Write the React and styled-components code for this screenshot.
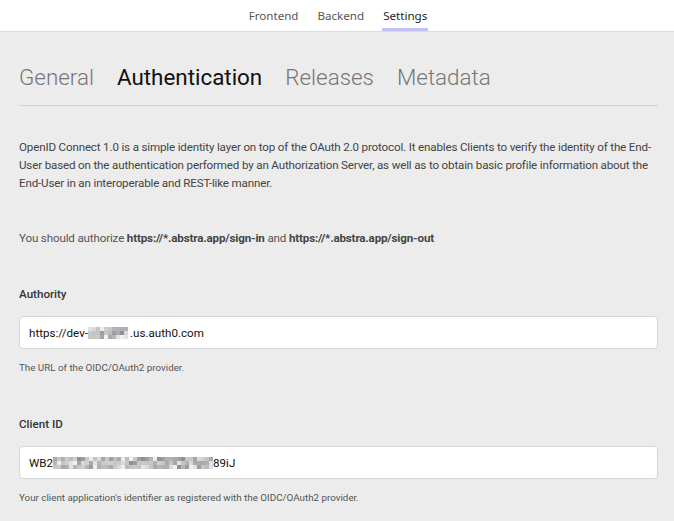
import React from "react";
import styled, { createGlobalStyle } from "styled-components";

const GlobalStyle = createGlobalStyle`
  html, body {
    margin: 0;
    padding: 0;
    background: #ececec;
  }
  body {
    font-family: Roboto, "Liberation Sans", sans-serif;
  }
`;

const topTabs = ["Frontend", "Backend", "Settings"];
const settingsTabs = ["General", "Authentication", "Releases", "Metadata"];

// pixelated (blurred) chunks of the secrets
const shades = [
  "#c9c9c9", "#b8b8bd", "#e2e2e2", "#a9a9ae", "#cfcfd3", "#bcbcbc", "#9d9da3",
  "#ececec", "#b0b0b5", "#c4c4c8", "#a4a4aa", "#dadada", "#b5b5b8", "#c8c8c0",
  "#f0f0f0", "#8f8f95",
];

const pick = (i, seed) => {
  const h = Math.sin(i * 12.9898 + seed * 78.233) * 43758.5453;
  return shades[Math.floor((h - Math.floor(h)) * shades.length)];
};

function Mosaic({ width, seed }) {
  const cols = Math.round(width / 4);
  return (
    <MosaicBox style={{ width }}>
      {Array.from({ length: cols * 3 }).map((_, i) => (
        <MosaicCell key={i} $c={pick(i, seed)} />
      ))}
    </MosaicBox>
  );
}

export default function App() {
  return (
    <Page>
      <GlobalStyle />
      <Header>
        {topTabs.map(t => (
          <TopTab key={t} $active={t === "Settings"}>{t}</TopTab>
        ))}
      </Header>
      <Content>
        <Tabs>
          {settingsTabs.map(t => (
            <Tab key={t} $active={t === "Authentication"}>{t}</Tab>
          ))}
        </Tabs>
        <Intro>
          OpenID Connect 1.0 is a simple identity layer on top of the OAuth 2.0 protocol. It enables Clients to verify the identity of the End-User based on the authentication performed by an Authorization Server, as well as to obtain basic profile information about the End-User in an interoperable and REST-like manner.
        </Intro>
        <Note>
          You should authorize <b>https://*.abstra.app/sign-in</b> and <b>https://*.abstra.app/sign-out</b>
        </Note>
        <Field>
          <Label>Authority</Label>
          <InputBox>
            https://dev-<Mosaic width={42} seed={1} />.us.auth0.com
          </InputBox>
          <Help>The URL of the OIDC/OAuth2 provider.</Help>
        </Field>
        <Field>
          <Label>Client ID</Label>
          <InputBox>
            WB2<Mosaic width={160} seed={4} />89iJ
          </InputBox>
          <Help>Your client application's identifier as registered with the OIDC/OAuth2 provider.</Help>
        </Field>
      </Content>
    </Page>
  );
}

const Page = styled.div`
  min-height: 100vh;
  background: #ececec;
`;

const Header = styled.div`
  height: 31px;
  background: #fff;
  border-bottom: 1px solid #dcdcdc;
  display: flex;
  justify-content: center;
  align-items: stretch;
  gap: 17px;
  padding-left: 2px;
`;

const TopTab = styled.div`
  font-family: "Noto Sans", "Open Sans", sans-serif;
  font-size: 11.6px;
  color: ${p => (p.$active ? "#222" : "#555")};
  display: flex;
  align-items: center;
  padding: 0 1px;
  box-sizing: border-box;
  border-bottom: 3px solid ${p => (p.$active ? "#c1c1f4" : "transparent")};
  padding-top: 3px;
`;

const Content = styled.div`
  padding: 0 16px 0 19px;
`;

const Tabs = styled.div`
  display: flex;
  gap: 23px;
  padding: 32px 0 15px;
  border-bottom: 1px solid #d4d4d4;
`;

const Tab = styled.div`
  font-size: 22.4px;
  font-weight: ${p => (p.$active ? 400 : 300)};
  color: ${p => (p.$active ? "#111" : "#777")};
  line-height: 26px;
`;

const Intro = styled.p`
  margin: 32px 0 0;
  font-size: 11.6px;
  line-height: 18px;
  color: #444;
  letter-spacing: -0.16px;
`;

const Note = styled.p`
  margin: 37px 0 0;
  font-size: 11.6px;
  line-height: 18px;
  color: #555;
  letter-spacing: -0.15px;
  b {
    color: #444;
    font-weight: 700;
  }
`;

const Field = styled.div`
  display: flex;
  flex-direction: column;
  margin-top: 38px;
  & + & {
    margin-top: 40px;
  }
`;

const Label = styled.div`
  font-size: 11.6px;
  font-weight: 500;
  color: #333;
  line-height: 18px;
`;

const InputBox = styled.div`
  margin-top: 13px;
  height: 33px;
  box-sizing: border-box;
  background: #fff;
  border: 1px solid #d6d6d6;
  border-radius: 4px;
  padding: 0 9px;
  display: flex;
  align-items: center;
  font-size: 11.6px;
  color: #111;
`;

const MosaicBox = styled.span`
  display: inline-flex;
  flex-wrap: wrap;
  height: 12px;
  overflow: hidden;
`;

const MosaicCell = styled.span`
  width: 4px;
  height: 4px;
  background: ${p => p.$c};
`;

const Help = styled.div`
  margin-top: 12px;
  font-size: 9.8px;
  color: #555;
  line-height: 14px;
`;
